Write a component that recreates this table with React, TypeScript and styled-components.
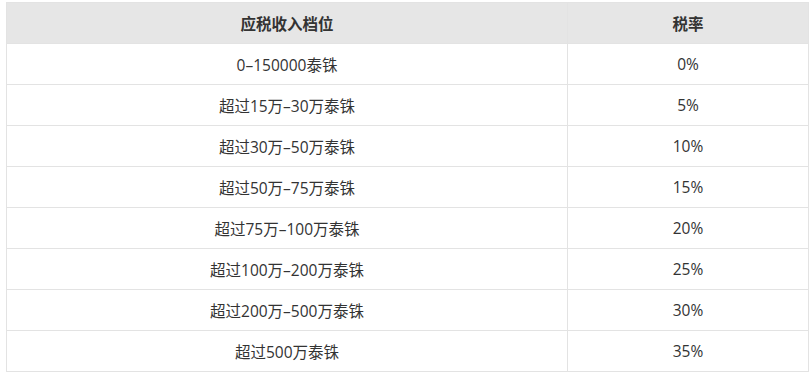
import React from "react";
import styled, { createGlobalStyle } from "styled-components";

const Global = createGlobalStyle`
  html, body { margin: 0; padding: 0; background: #fff; }
  body { font-family: "Open Sans", "Noto Sans CJK SC", sans-serif; }
`;

const Wrap = styled.div`
  padding: 2px 5px 0 6px;
`;

const Table = styled.table`
  width: 800px;
  border-collapse: collapse;
  table-layout: fixed;
  color: #333;
  font-size: 15.5px;
`;

const Th = styled.th<{ $w: number }>`
  width: ${(p) => p.$w}px;
  height: 40px;
  padding: 0;
  background: #e6e6e6;
  border: 1px solid #e3e3e3;
  font-weight: bold;
  text-align: center;
  vertical-align: middle;
`;

const Td = styled.td`
  height: 40px;
  padding: 0;
  border: 1px solid #e3e3e3;
  text-align: center;
  vertical-align: middle;
`;

const rows: [string, string][] = [
  ["0–150000泰铢", "0%"],
  ["超过15万–30万泰铢", "5%"],
  ["超过30万–50万泰铢", "10%"],
  ["超过50万–75万泰铢", "15%"],
  ["超过75万–100万泰铢", "20%"],
  ["超过100万–200万泰铢", "25%"],
  ["超过200万–500万泰铢", "30%"],
  ["超过500万泰铢", "35%"],
];

export default function App() {
  return (
    <Wrap>
      <Global />
      <Table>
        <thead>
          <tr>
            <Th $w={560}>应税收入档位</Th>
            <Th $w={240}>税率</Th>
          </tr>
        </thead>
        <tbody>
          {rows.map(([a, b]) => (
            <tr key={a}>
              <Td>{a}</Td>
              <Td>{b}</Td>
            </tr>
          ))}
        </tbody>
      </Table>
    </Wrap>
  );
}
